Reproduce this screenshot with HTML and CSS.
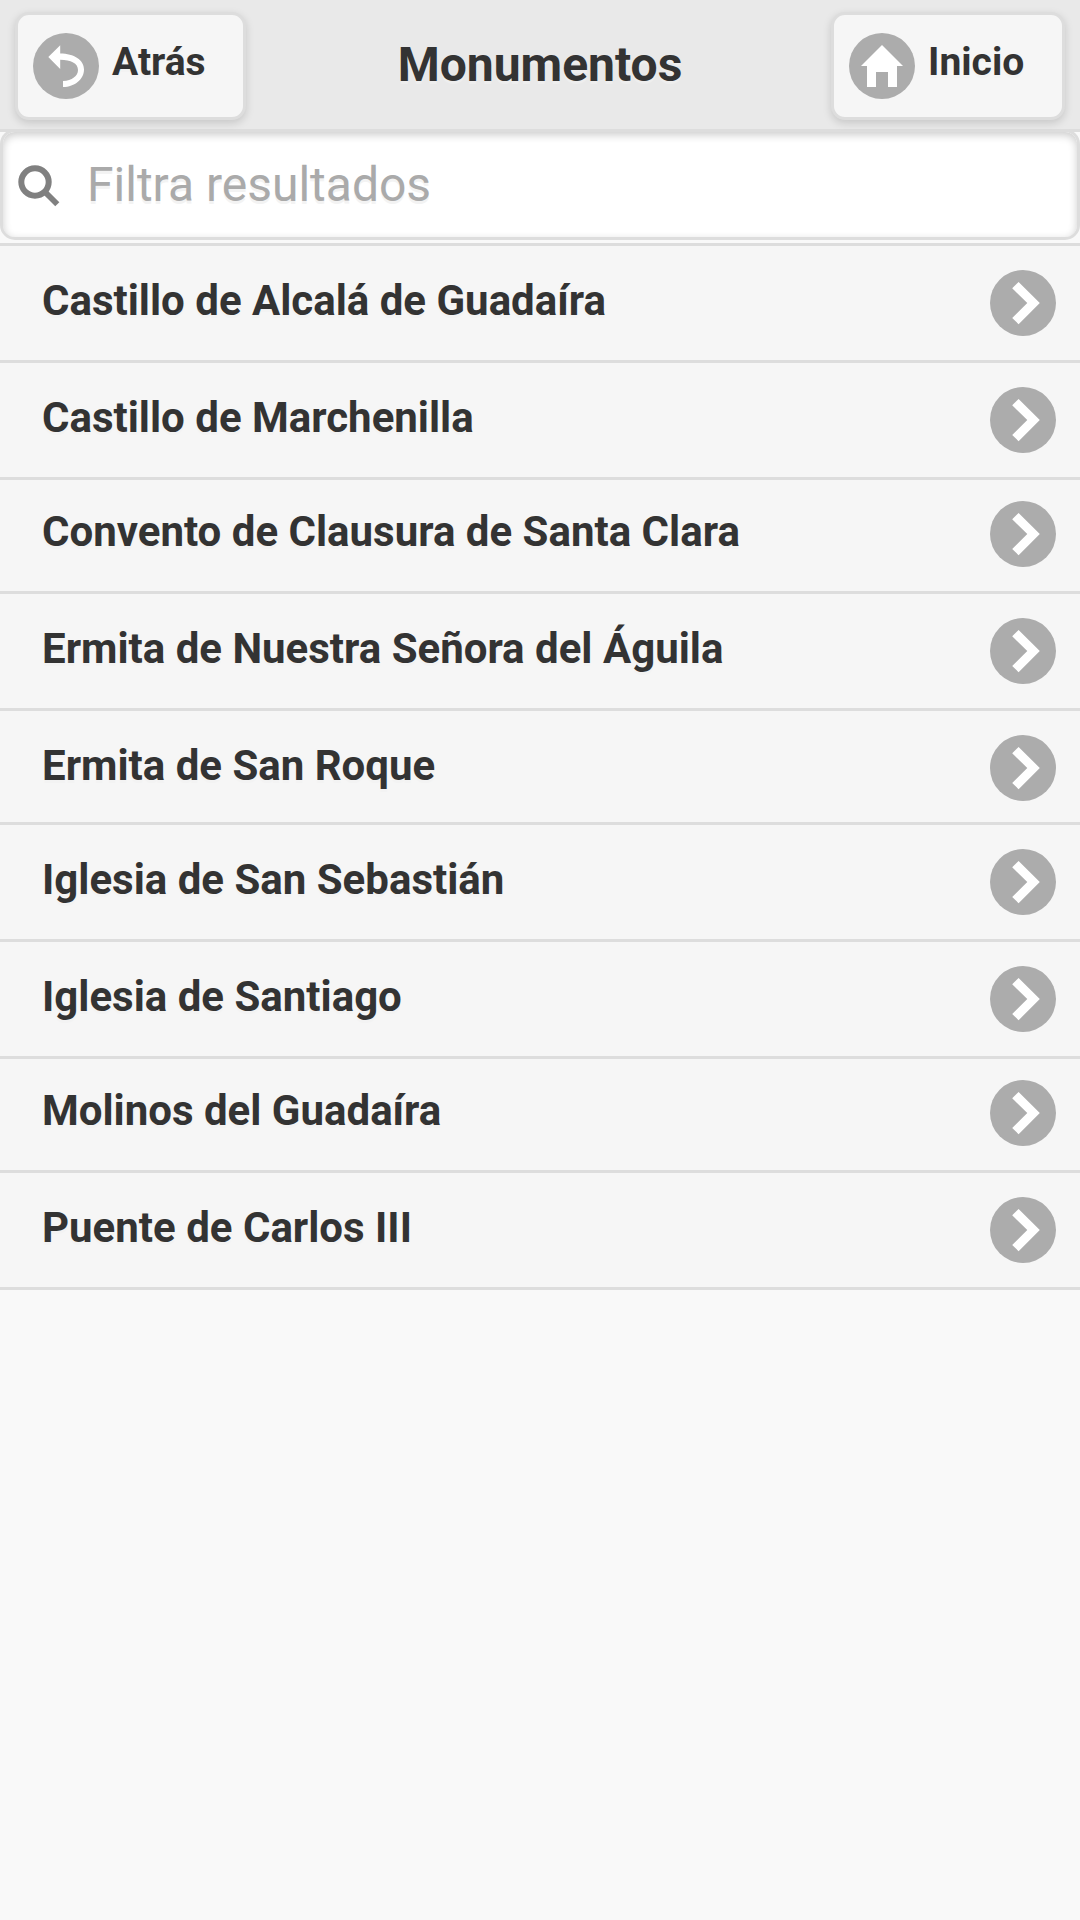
FILE: index.html
```html
<!DOCTYPE html>
<html lang="es">
<head>
<meta charset="utf-8">
<title>Monumentos</title>
<link rel="stylesheet" href="styles.css">
</head>
<body>
<svg class="defs" aria-hidden="true">
  <symbol id="arrow" viewBox="0 0 66 66"><circle cx="33" cy="33" r="33" fill="#acacac"/><path fill="#fff" d="M28.6 12L49.8 33L28.6 54.2L22.2 48L37.3 33L22.2 18.2Z"/></symbol>
</svg>
<header class="header">
  <a class="btn btn-back"><svg class="icon" viewBox="0 0 66 66"><circle cx="33" cy="33" r="33" fill="#acacac"/><path fill="#fff" d="M15.3 24L27.2 12.2V20.6C41 20.6 51 27 51 36.5C51 46 42 54 30 54V48C39 47.6 45 43 45 37C45 30.5 38 26.8 27.2 26.8V36Z"/></svg><span class="btn-label">Atrás</span></a>
  <h1 class="title">Monumentos</h1>
  <a class="btn btn-home"><svg class="icon" viewBox="0 0 66 66"><circle cx="33" cy="33" r="33" fill="#acacac"/><path fill="#fff" d="M33 12L54 33H48V54H39V39H27V54H18V33H12Z"/></svg><span class="btn-label">Inicio</span></a>
</header>
<main>
  <div class="search">
    <svg class="search-icon" viewBox="0 0 42 42"><circle cx="17" cy="17" r="13.7" fill="none" stroke="#808080" stroke-width="6"/><path d="M26.5 26.5L39.3 39.3" stroke="#808080" stroke-width="5.8"/></svg>
    <input class="search-input" type="text" placeholder="Filtra resultados">
  </div>
  <ul class="list">
    <li class="row"><span class="name">Castillo de Alcalá de Guadaíra</span><svg class="icon"><use href="#arrow"/></svg></li>
    <li class="row"><span class="name">Castillo de Marchenilla</span><svg class="icon"><use href="#arrow"/></svg></li>
    <li class="row row-raised"><span class="name">Convento de Clausura de Santa Clara</span><svg class="icon"><use href="#arrow"/></svg></li>
    <li class="row"><span class="name">Ermita de Nuestra Señora del Águila</span><svg class="icon"><use href="#arrow"/></svg></li>
    <li class="row row-short"><span class="name">Ermita de San Roque</span><svg class="icon"><use href="#arrow"/></svg></li>
    <li class="row"><span class="name">Iglesia de San Sebastián</span><svg class="icon"><use href="#arrow"/></svg></li>
    <li class="row"><span class="name">Iglesia de Santiago</span><svg class="icon"><use href="#arrow"/></svg></li>
    <li class="row row-raised"><span class="name">Molinos del Guadaíra</span><svg class="icon"><use href="#arrow"/></svg></li>
    <li class="row"><span class="name">Puente de Carlos III</span><svg class="icon"><use href="#arrow"/></svg></li>
  </ul>
</main>
</body>
</html>
```
FILE: styles.css
```css
* { box-sizing: border-box; }
body {
  margin: 0;
  min-height: 1920px;
  background: #f9f9f9;
  color: #333;
  font-family: Roboto, sans-serif;
}
.defs { display: none; }
.icon { display: block; flex: none; width: 66px; height: 66px; }

.header {
  display: grid;
  grid-template-columns: 231px 1fr 234px;
  align-items: start;
  height: 132px;
  padding: 12px 15px 0;
  background: #e9e9e9;
  border-bottom: 3px solid #ddd;
  text-shadow: 0 3px 0 #eee;
}
.btn {
  display: flex;
  height: 108px;
  padding: 18px 0 0 15px;
  background: #f6f6f6;
  border: 3px solid #ddd;
  border-radius: 14px;
  box-shadow: 0 3px 9px rgba(0, 0, 0, .15);
  font-size: 39px;
  font-weight: 700;
  text-shadow: 0 3px 0 #f3f3f3;
}
.btn-label { padding-left: 13px; line-height: 59px; }
.title {
  margin: 0;
  padding: 25px 0 0 3px;
  font-size: 48px;
  line-height: 56px;
  text-align: center;
}

.search {
  display: flex;
  align-items: center;
  height: 111px;
  margin: -3px 0 3px;
  padding-left: 15px;
  background: #fff;
  border: 3px solid #ddd;
  border-radius: 15px;
  box-shadow: inset 0 3px 9px rgba(0, 0, 0, .2);
}
.search-icon { flex: none; width: 42px; height: 42px; margin-top: 3px; }
.search-input {
  flex: 1;
  height: 100%;
  padding: 0 0 0 27px;
  border: 0;
  outline: 0;
  background: none;
  font: 400 48px Roboto, sans-serif;
  text-shadow: 0 3px 0 #f3f3f3;
}
.search-input::placeholder { color: #aaa; opacity: 1; }

.list {
  margin: 0;
  padding: 0;
  list-style: none;
  border-top: 3px solid #ddd;
}
.row {
  display: flex;
  justify-content: space-between;
  height: 117px;
  padding: 24px 24px 0 42px;
  background: #f6f6f6;
  border-bottom: 3px solid #ddd;
  font-size: 42px;
  font-weight: 700;
  text-shadow: 0 3px 0 #f3f3f3;
}
.row-short { height: 114px; }
.row-raised { height: 114px; padding-top: 21px; }
.name { line-height: 62px; }
```
